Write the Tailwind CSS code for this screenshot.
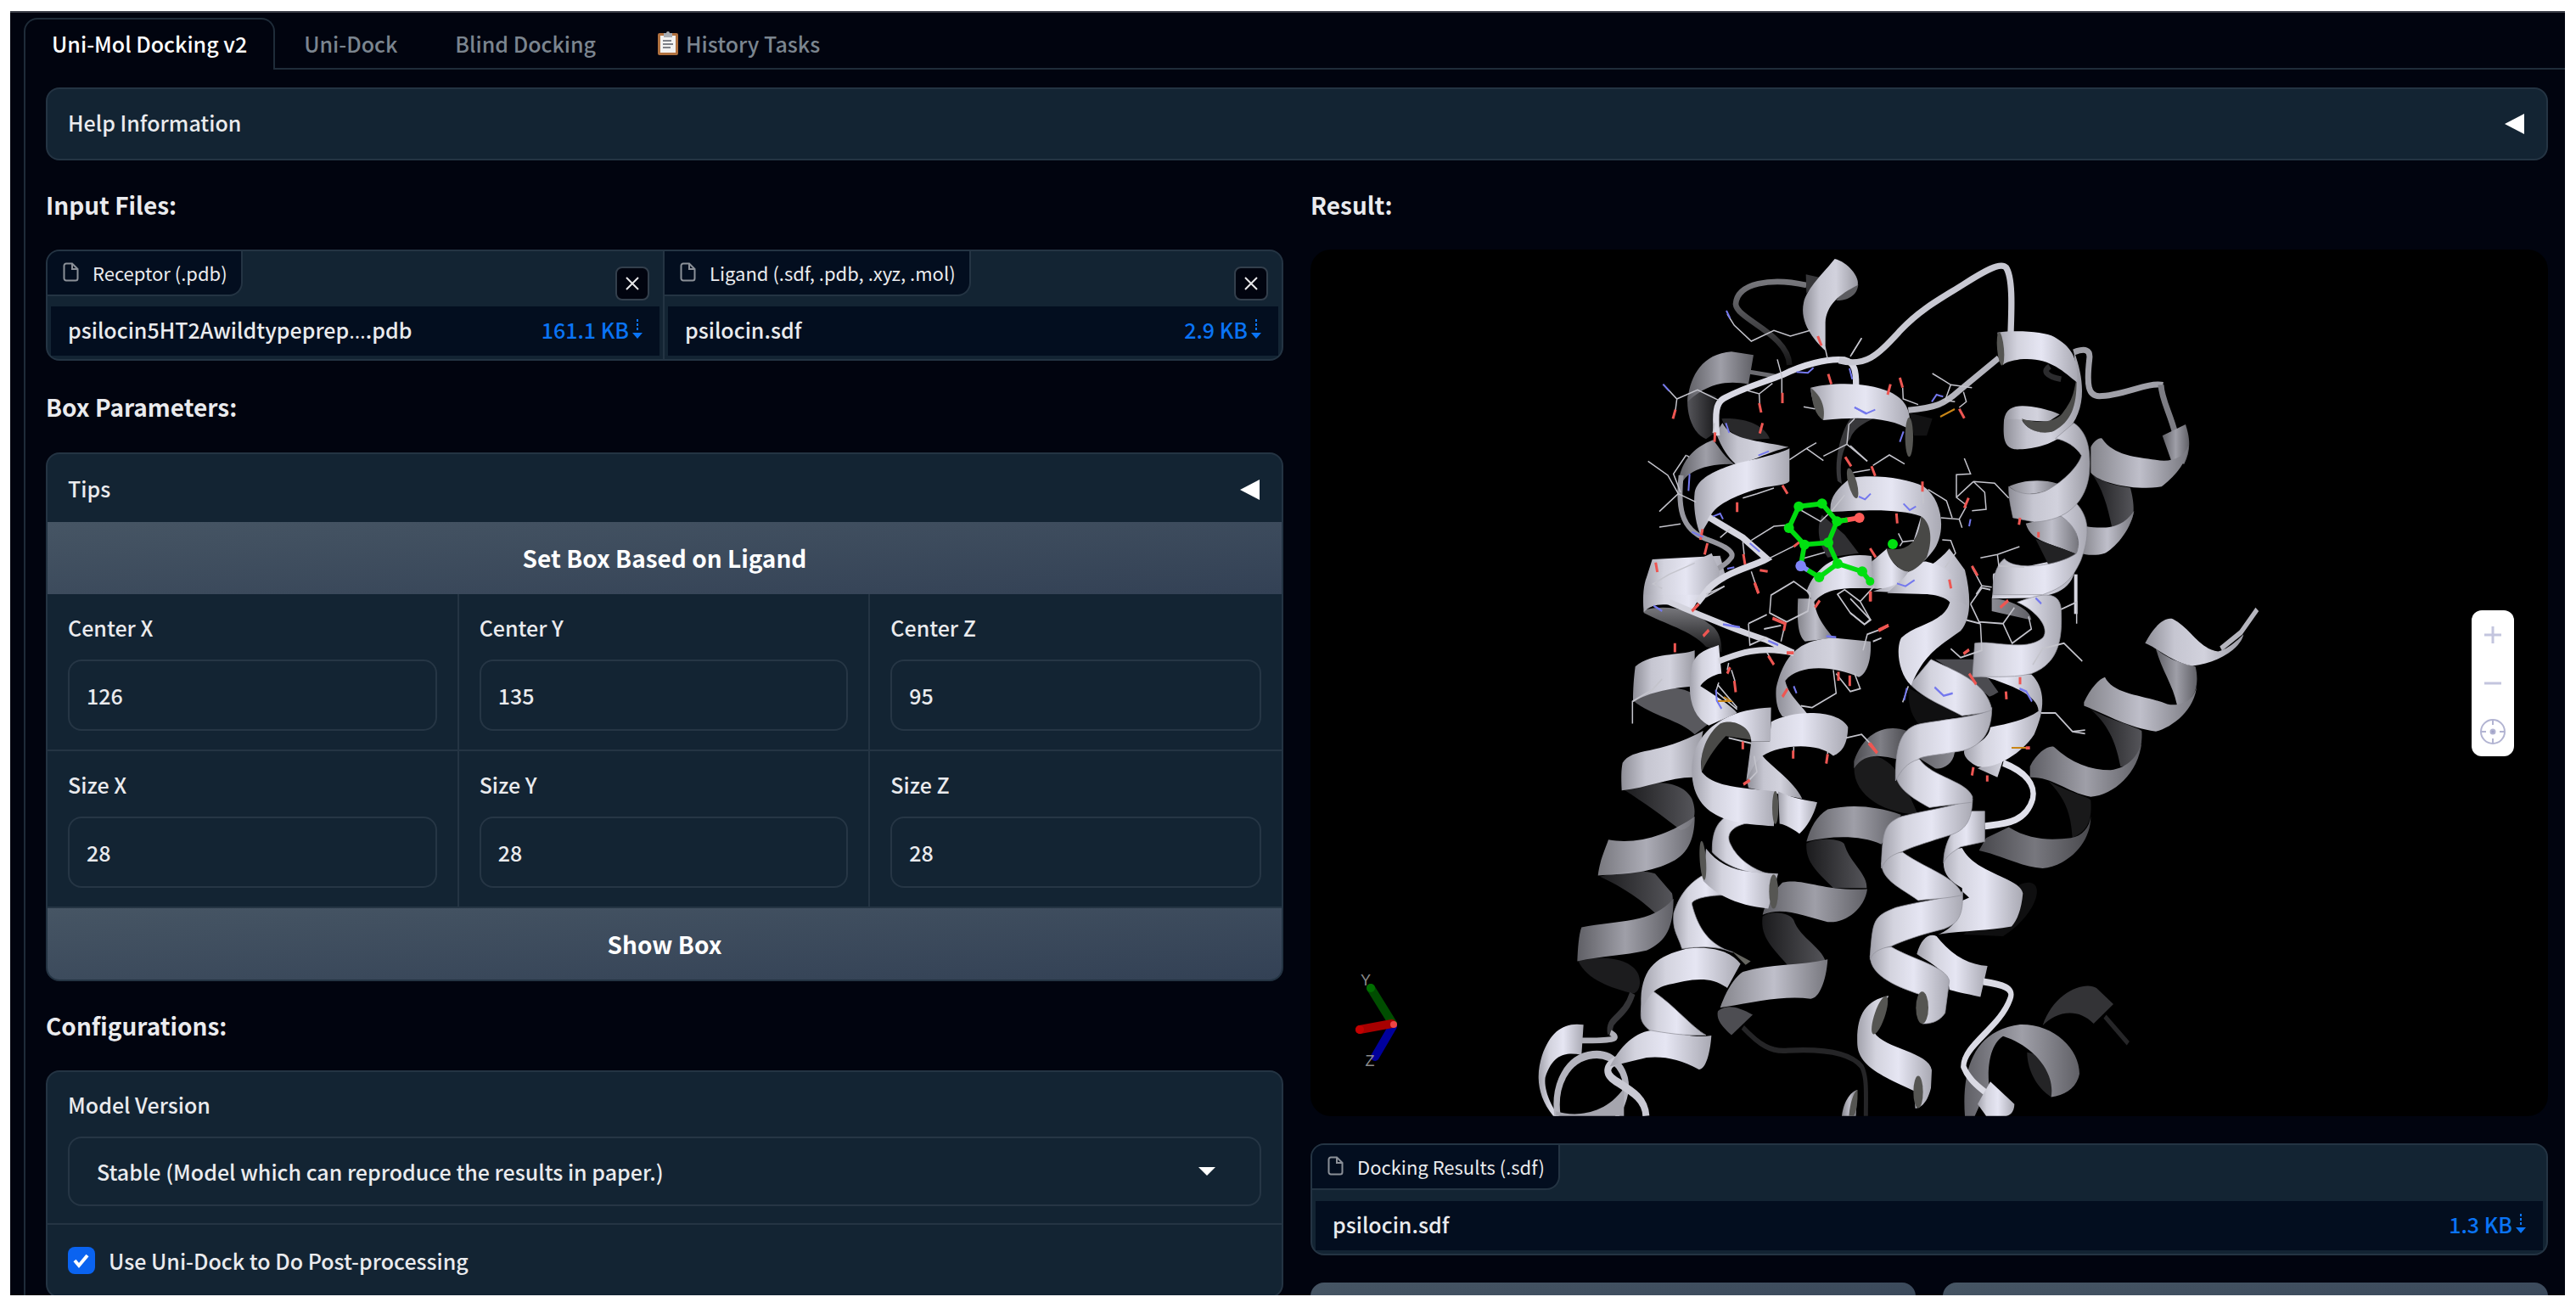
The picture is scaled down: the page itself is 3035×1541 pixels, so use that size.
<!DOCTYPE html>
<html lang="en">
<head>
    <meta charset="UTF-8">
    <meta name="viewport" content="width=device-width, initial-scale=1.0">
    <title>Uni-Mol Docking</title>
    <script src="https://cdn.jsdelivr.net/npm/@tailwindcss/browser@4"></script>
</head>
<body class="h-screen bg-white pt-[13px] pb-[15px] pl-3 pr-[13px] font-['Noto_Sans_CJK_SC','Open_Sans',sans-serif] text-[25px] leading-9 font-medium text-[#eaebee]">
    <main class="h-full overflow-hidden border-t-2 border-[#3c3f49] bg-[#01040f] pl-4 pt-1.5">
        <!-- Tabs -->
        <nav class="flex h-[61px]" role="tablist">
            <button type="button" role="tab" aria-selected="true" class="rounded-t-2xl border-2 border-b-0 border-[#1f2c39] px-[31px] pb-1 text-white">Uni-Mol Docking v2</button>
            <div class="flex flex-1 border-b-2 border-[#1f2c39] text-[#7b858f]">
                <button type="button" role="tab" class="px-[34px]">Uni-Dock</button>
                <button type="button" role="tab" class="px-[34px]">Blind Docking</button>
                <button type="button" role="tab" class="flex items-center gap-2 px-[38px]">
                    <svg class="h-[30px] w-[26px]" viewBox="0 0 26 30" aria-hidden="true">
                        <rect x="1" y="3" width="24" height="26" rx="2" fill="#b0713f"/>
                        <rect x="4" y="6" width="18" height="20" fill="#f2f2f2"/>
                        <path d="M8 3h3a2 2 0 0 1 4 0h3v5H8z" fill="#a9adb3"/>
                        <path d="M7 12h10M7 16h12M7 20h9" stroke="#7d8188" stroke-width="2"/>
                    </svg>
                    History Tasks
                </button>
            </div>
        </nav>

        <div class="border-l-2 border-[#1f2c39] pb-40 pl-6 pr-5 pt-[21px]">
            <button type="button" class="flex h-[86px] w-full items-center justify-between rounded-2xl border-2 border-[#243443] bg-[#132433] pb-1 pl-6 pr-[26px]">
                Help Information
                <svg class="mt-1 h-6 w-[23px]" viewBox="0 0 23 24" aria-hidden="true"><path d="M0 12 23 0v24z" fill="#fff"/></svg>
            </button>

            <div class="mt-8 grid grid-cols-2 gap-8">
                <!-- Left column -->
                <div>
                    <h2 class="h-[73px] pt-0.5 text-[28px] font-bold">Input Files:</h2>
                    <div class="grid h-[131px] grid-cols-2 overflow-hidden rounded-2xl border-2 border-[#243443] bg-[#132433]">
                        <section class="flex flex-col justify-between border-r-2 border-[#243443]">
                            <div class="flex justify-between pr-4">
                                <h3 class="flex h-[53px] items-center gap-4 rounded-br-2xl border-b-2 border-r-2 border-[#243443] bg-[#030e1f] pb-0.5 pl-[18px] pr-4 text-[22px] font-normal">
                                    <svg class="h-[23px] w-[19px]" viewBox="0 0 19 23" fill="none" stroke="#8b9098" stroke-width="2" aria-hidden="true"><path d="M11 1.500H4a2.500 2.500 0 0 0-2.500 2.500v15A2.500 2.500 0 0 0 4 21.500h11a2.500 2.500 0 0 0 2.500-2.500V8zM11 1.500V8h6.500"/></svg>
                                    Receptor (.pdb)
                                </h3>
                                <button type="button" aria-label="Clear receptor" class="mt-[18px] grid size-10 place-items-center rounded-lg border-2 border-[#333f4c] bg-[#01040f]">
                                    <svg class="size-4" viewBox="0 0 16 16" stroke="#e8e8ea" stroke-width="2" aria-hidden="true"><path d="M1 1l14 14M15 1 1 15"/></svg>
                                </button>
                            </div>
                            <div class="mx-1 mb-1 flex h-[58px] items-center justify-between bg-[#030e1f] px-5 pb-1">
                                <span>psilocin5HT2Awildtypeprep<span class="font-['Open_Sans']">…</span>.pdb</span>
                                <a href="#" class="flex items-center gap-1 text-[#0a74f5]">161.1 KB
                                    <svg class="h-6 w-3" viewBox="0 0 12 24" fill="#0a74f5" aria-hidden="true"><path d="M5 0h2v3H5zM5 5h2v3H5zM5 10h2v3H5zM0 16h12l-6 7z"/></svg>
                                </a>
                            </div>
                        </section>
                        <section class="flex flex-col justify-between">
                            <div class="flex justify-between pr-4">
                                <h3 class="flex h-[53px] items-center gap-4 rounded-br-2xl border-b-2 border-r-2 border-[#243443] bg-[#030e1f] pb-0.5 pl-[18px] pr-4 text-[22px] font-normal">
                                    <svg class="h-[23px] w-[19px]" viewBox="0 0 19 23" fill="none" stroke="#8b9098" stroke-width="2" aria-hidden="true"><path d="M11 1.500H4a2.500 2.500 0 0 0-2.500 2.500v15A2.500 2.500 0 0 0 4 21.500h11a2.500 2.500 0 0 0 2.500-2.500V8zM11 1.500V8h6.500"/></svg>
                                    Ligand (.sdf, .pdb, .xyz, .mol)
                                </h3>
                                <button type="button" aria-label="Clear ligand" class="mt-[18px] grid size-10 place-items-center rounded-lg border-2 border-[#333f4c] bg-[#01040f]">
                                    <svg class="size-4" viewBox="0 0 16 16" stroke="#e8e8ea" stroke-width="2" aria-hidden="true"><path d="M1 1l14 14M15 1 1 15"/></svg>
                                </button>
                            </div>
                            <div class="mx-1 mb-1 flex h-[58px] items-center justify-between bg-[#030e1f] px-5 pb-1">
                                <span>psilocin.sdf</span>
                                <a href="#" class="flex items-center gap-1 text-[#0a74f5]">2.9 KB
                                    <svg class="h-6 w-3" viewBox="0 0 12 24" fill="#0a74f5" aria-hidden="true"><path d="M5 0h2v3H5zM5 5h2v3H5zM5 10h2v3H5zM0 16h12l-6 7z"/></svg>
                                </a>
                            </div>
                        </section>
                    </div>

                    <h2 class="mt-8 h-[76px] pt-1 text-[28px] font-bold">Box Parameters:</h2>
                    <form class="overflow-hidden rounded-2xl border-2 border-[#243443] bg-[#132433]">
                        <button type="button" class="flex h-20 w-full items-center justify-between pl-6 pr-[26px]">
                            Tips
                            <svg class="mt-1 h-6 w-[23px]" viewBox="0 0 23 24" aria-hidden="true"><path d="M0 12 23 0v24z" fill="#fff"/></svg>
                        </button>
                        <button type="button" class="block h-[85px] w-full bg-linear-to-br from-[#465564] to-[#334155] pb-0.5 text-[28px] font-bold text-white">Set Box Based on Ligand</button>
                        <div class="grid grid-cols-3 divide-x-2 divide-[#243443] border-b-2 border-[#243443]">
                            <div class="px-6 pb-[22px] pt-[21px]">
                                <label for="cx" class="block">Center X</label>
                                <input id="cx" type="number" value="126" class="mt-5 h-[84px] w-full rounded-2xl border-2 border-[#263645] px-5">
                            </div>
                            <div class="px-6 pb-[22px] pt-[21px]">
                                <label for="cy" class="block">Center Y</label>
                                <input id="cy" type="number" value="135" class="mt-5 h-[84px] w-full rounded-2xl border-2 border-[#263645] px-5">
                            </div>
                            <div class="px-6 pb-[22px] pt-[21px]">
                                <label for="cz" class="block">Center Z</label>
                                <input id="cz" type="number" value="95" class="mt-5 h-[84px] w-full rounded-2xl border-2 border-[#263645] px-5">
                            </div>
                        </div>
                        <div class="grid grid-cols-3 divide-x-2 divide-[#243443] border-b-2 border-[#243443]">
                            <div class="px-6 pb-[22px] pt-[21px]">
                                <label for="sx" class="block">Size X</label>
                                <input id="sx" type="number" value="28" class="mt-5 h-[84px] w-full rounded-2xl border-2 border-[#263645] px-5">
                            </div>
                            <div class="px-6 pb-[22px] pt-[21px]">
                                <label for="sy" class="block">Size Y</label>
                                <input id="sy" type="number" value="28" class="mt-5 h-[84px] w-full rounded-2xl border-2 border-[#263645] px-5">
                            </div>
                            <div class="px-6 pb-[22px] pt-[21px]">
                                <label for="sz" class="block">Size Z</label>
                                <input id="sz" type="number" value="28" class="mt-5 h-[84px] w-full rounded-2xl border-2 border-[#263645] px-5">
                            </div>
                        </div>
                        <button type="button" class="block h-[84px] w-full bg-linear-to-br from-[#465564] to-[#334155] text-[28px] font-bold text-white">Show Box</button>
                    </form>

                    <h2 class="mt-8 h-[73px] pt-0.5 text-[28px] font-bold">Configurations:</h2>
                    <form class="rounded-2xl border-2 border-[#243443] bg-[#132433]">
                        <div class="border-b-2 border-[#243443] px-6 pb-5 pt-5">
                            <label for="model" class="block">Model Version</label>
                            <div class="relative mt-5">
                                <select id="model" class="h-[82px] w-full appearance-none rounded-2xl border-2 border-[#263645] bg-[#132433] px-8">
                                    <option>Stable (Model which can reproduce the results in paper.)</option>
                                </select>
                                <svg class="pointer-events-none absolute right-[54px] top-9 h-2.5 w-5" viewBox="0 0 20 10" aria-hidden="true"><path d="M0 0h20L10 10z" fill="#fff"/></svg>
                            </div>
                        </div>
                        <div class="flex h-[84px] items-center gap-4 px-6">
                            <span class="relative grid size-8 place-items-center">
                                <input id="post" type="checkbox" checked class="size-8 appearance-none rounded-lg bg-[#0a63f0]">
                                <svg class="pointer-events-none absolute size-5" viewBox="0 0 20 20" fill="none" stroke="#fff" stroke-width="4" aria-hidden="true"><path d="M2 10l5 6L17 4"/></svg>
                            </span>
                            <label for="post">Use Uni-Dock to Do Post-processing</label>
                        </div>
                    </form>
                </div>

                <!-- Right column -->
                <div>
                    <h2 class="h-[73px] pt-0.5 text-[28px] font-bold">Result:</h2>
                    <div class="relative overflow-hidden rounded-3xl bg-black">
                        <svg class="block w-full" viewBox="1544 294 1458 1021" role="img" aria-label="Docked ligand in receptor">
                            <defs>
                                <linearGradient id="light"><stop offset="0" stop-color="#a2a2ac"/><stop offset=".25" stop-color="#d3d3de"/><stop offset=".55" stop-color="#e6e6f3"/><stop offset="1" stop-color="#a9a9b3"/></linearGradient>
                                <linearGradient id="pale"><stop offset="0" stop-color="#8e8e97"/><stop offset=".3" stop-color="#c6c6d1"/><stop offset=".6" stop-color="#d2d2dd"/><stop offset="1" stop-color="#9a9aa3"/></linearGradient>
                                <linearGradient id="mid"><stop offset="0" stop-color="#5f5f65"/><stop offset=".5" stop-color="#9f9fa8"/><stop offset="1" stop-color="#606066"/></linearGradient>
                                <linearGradient id="soft"><stop offset="0" stop-color="#85858c"/><stop offset=".5" stop-color="#bfbfca"/><stop offset="1" stop-color="#77777e"/></linearGradient>
                                <linearGradient id="dark"><stop offset="0" stop-color="#1b1b1d"/><stop offset="1" stop-color="#55555a"/></linearGradient>
                                <linearGradient id="fog" x1="0" y1="0" x2="0" y2="1"><stop offset="0" stop-color="#77777c"/><stop offset="1" stop-color="#161617"/></linearGradient>
                            </defs>

                            <!-- lower right, far layer -->
                            <g transform="translate(2180 680) scale(.33333 .42088)">
                                <path fill="#0f0f10" d="M600 860C700 830 670 940 540 1005L400 1000z"/>
                                <path fill="#19191a" d="M700 570C760 600 850 615 850 625 855 680 840 710 785 730 780 660 760 620 700 570z"/>
                                <path fill="url(#mid)" opacity=".75" d="M455 765L480 730 560 700C640 740 720 735 780 730 820 725 845 700 850 670 850 750 760 810 680 815 600 810 540 780 455 765z"/>
                                <path fill="url(#dark)" d="M850 370C920 400 1000 415 1030 430 1035 480 1010 530 955 530 940 470 920 420 850 370z"/>
                                <path fill="url(#mid)" d="M635 530C660 490 700 470 720 475 780 520 850 540 920 540 980 535 1020 500 1030 460 1020 550 930 610 850 615 760 600 720 560 635 560z"/>
                                <path fill="url(#mid)" d="M1080 200C1140 240 1200 245 1220 250 1235 300 1220 350 1155 358 1140 300 1100 260 1080 200z"/>
                                <path fill="url(#soft)" d="M826 350C850 310 880 285 900 280 930 330 1040 330 1120 355 1170 365 1220 340 1225 300 1220 370 1140 420 1080 432 980 420 920 390 826 360z"/>
                                <path fill="url(#pale)" d="M1042 185C1070 140 1110 110 1140 117 1200 140 1230 200 1300 208 1340 200 1370 175 1390 160 1380 200 1300 240 1210 248 1140 240 1090 200 1042 185z"/>
                                <path fill="none" stroke="#b5b5be" stroke-width="15" d="M1310 200L1380 155 1438 90"/>
                                <path fill="#333336" d="M680 1255C720 1160 830 1130 870 1150L930 1195 860 1250C800 1200 720 1220 680 1255z"/>
                                <path fill="none" stroke="#262628" stroke-width="14" d="M900 1230L982 1305"/>
                                <path fill="#242426" d="M625 1330C700 1340 715 1370 718 1390L710 1455C660 1430 625 1380 625 1330z"/>
                                <path fill="url(#mid)" d="M405 1508C395 1400 420 1270 600 1252 720 1250 810 1320 810 1390 800 1430 760 1450 710 1455 725 1380 640 1310 540 1285 490 1310 485 1380 490 1420L440 1508z"/>
                                <path fill="#4b4b50" d="M300 230L440 230 540 340 500 340C440 300 360 260 300 230z"/>
                                <path fill="url(#mid)" d="M500 60C560 60 640 90 640 120L500 95zM230 500L370 480C370 520 330 540 300 535z"/>
                            </g>

                            <!-- lower left helices -->
                            <g transform="translate(1780 680) scale(.33333 .42088)">
                                <path fill="#1b1b1c" d="M1215 520C1260 480 1330 500 1380 560L1440 665C1300 660 1200 600 1215 520z"/>
                                <path fill="url(#mid)" opacity=".8" d="M1213 515C1250 430 1330 410 1400 430L1400 515C1330 505 1260 480 1213 535z"/>
                                <path fill="url(#dark)" d="M1045 745C1100 725 1180 735 1180 750 1200 800 1260 830 1258 870L1140 870C1090 830 1040 800 1045 745z"/>
                                <path fill="url(#mid)" d="M1045 740C1060 700 1080 670 1120 650 1200 635 1290 640 1380 665L1310 748C1230 720 1130 725 1045 740z"/>
                                <path fill="url(#dark)" d="M890 950C920 930 990 940 1000 960 1020 1010 1110 1040 1115 1085L980 1088C930 1040 880 1010 890 950z"/>
                                <path fill="url(#mid)" d="M890 945C900 910 930 880 960 855 1030 840 1100 880 1260 873 1250 930 1180 970 1120 965 1040 950 960 920 890 945z"/>
                                <path fill="#4d4d52" d="M732 1215C760 1195 800 1200 855 1225L780 1282C750 1260 725 1240 732 1215z"/>
                                <path fill="none" stroke="#252527" stroke-width="15" d="M820 1260C880 1310 920 1330 980 1325 1100 1320 1200 1330 1240 1370 1260 1400 1255 1450 1255 1508"/>
                                <path fill="url(#soft)" d="M740 1205C760 1160 790 1120 820 1105 920 1080 1020 1090 1120 1070 1115 1130 1090 1180 1060 1180 960 1170 860 1190 740 1205z"/>

                                <path fill="url(#fog)" d="M470 92C550 75 640 90 700 130 745 150 745 190 745 210L690 195C640 150 540 130 470 100z"/>
                                <path fill="#59595e" d="M432 345C520 305 600 300 650 330L700 410 650 440C600 400 500 390 432 345z"/>
                                <path fill="url(#pale)" d="M440 250C500 210 600 220 650 205L650 305C580 310 490 320 432 350 432 310 435 280 440 250z"/>
                                <path fill="url(#dark)" d="M400 595C470 570 600 560 640 620 660 660 650 700 600 708 540 670 470 630 400 595z"/>
                                <path fill="url(#pale)" d="M395 520C430 475 520 500 680 430L645 560C560 560 480 590 392 597 390 560 390 540 395 520z"/>
                                <path fill="url(#dark)" d="M315 838C400 820 480 820 510 830L570 885C580 920 560 940 530 955 460 900 400 870 315 838z"/>
                                <path fill="url(#soft)" opacity=".9" d="M345 735C450 750 560 720 650 670 650 740 620 780 560 800 480 830 400 830 308 835 315 790 335 760 345 735z"/>
                                <path fill="#1c1c1e" d="M237 1072C300 1060 420 1060 450 1110 465 1140 450 1165 430 1165 360 1150 270 1130 237 1072z"/>
                                <path fill="url(#mid)" d="M250 980C380 960 500 970 575 900 575 980 550 1020 480 1045 400 1060 320 1060 235 1075 237 1040 240 1000 250 980z"/>
                                <path fill="none" stroke="#343437" stroke-width="20" d="M430 1165C400 1240 340 1230 352 1278"/>
                                <path fill="none" stroke="#b0b0b9" stroke-width="16" d="M352 1275C390 1292 370 1298 250 1297"/>
                                <path fill="url(#light)" d="M257 1253L250 1337C200 1330 150 1330 122 1400 115 1440 150 1490 170 1508L150 1508C90 1450 90 1390 110 1340 140 1270 190 1245 257 1253z"/>
                                <path fill="none" stroke="#b4b4be" stroke-width="22" d="M165 1508C150 1420 200 1345 290 1337 370 1330 415 1390 405 1440 395 1480 380 1495 370 1508"/>
                                <path fill="#a5a5ae" d="M160 1495C220 1510 330 1510 400 1430L400 1508H160z"/>
                                <path fill="none" stroke="#c9c9d3" stroke-width="24" d="M400 1345C330 1360 330 1390 370 1410 430 1440 475 1460 478 1508"/>
                                <path fill="url(#light)" d="M350 1370C400 1290 470 1260 540 1268 600 1280 660 1290 709 1283 705 1330 690 1378 665 1378 600 1350 540 1340 480 1345 430 1355 400 1360 350 1370z"/>
                                <path fill="url(#light)" stroke="#92929b" stroke-width="2" d="M462 1200C470 1170 490 1160 505 1160 580 1200 640 1260 690 1282 620 1285 540 1275 490 1268 455 1245 458 1230 462 1200z"/>
                                <path fill="url(#light)" stroke="#92929b" stroke-width="2" d="M576 940C600 880 640 850 690 830L760 890C700 890 640 900 640 915 660 980 700 1030 785 1050 720 1030 660 1035 605 1040 590 1000 570 990 576 940z"/>
                                <path fill="url(#light)" d="M460 1180C465 1090 520 1060 620 1040 720 1030 780 1050 812 1082L765 1150C700 1110 620 1130 560 1140 500 1150 480 1180 460 1220z"/>
                                <path fill="#65655f" d="M782 1047L848 1075 830 1085z"/>
                                <path fill="url(#light)" stroke="#92929b" stroke-width="2" d="M712 770C710 700 740 680 770 665L870 685C780 690 760 720 775 745 800 790 860 820 910 830 830 830 760 810 712 770z"/>
                                <path fill="url(#light)" d="M690 760C760 830 850 825 945 830L910 928C820 920 740 900 680 850z"/>
                                <ellipse cx="679" cy="793" rx="11" ry="55" fill="#565653" transform="rotate(-5 679 793)"/>
                                <ellipse cx="929" cy="880" rx="16" ry="48" fill="#565653"/>

                                <path fill="url(#light)" d="M735 190L745 270C720 270 680 290 670 305 720 330 780 360 800 380L700 415C640 390 620 330 640 250 650 210 700 200 735 190z"/>
                                <path fill="url(#soft)" d="M1015 60C1010 140 1020 165 1040 180L1140 170C1100 130 1080 110 1070 60z"/>
                                <path fill="url(#pale)" d="M938 310C970 200 1040 175 1140 170L1272 180C1275 230 1260 270 1230 280 1150 250 1020 240 970 290 980 330 1030 360 1050 385L960 390C940 370 935 340 938 310z"/>
                                <path fill="url(#pale)" d="M835 570C840 500 860 480 890 500 920 530 1000 570 1030 620L840 590z"/>
                                <path fill="url(#light)" d="M920 405C1000 370 1160 370 1192 420 1190 470 1170 490 1140 500 1080 460 950 470 890 500 860 520 850 540 832 570L850 460 915 460z"/>
                                <path fill="url(#light)" d="M945 600C1000 620 1050 625 1083 630 1070 670 1045 700 1020 718 990 700 960 690 950 690z"/>
                                <path fill="#4a4a48" d="M675 545C665 440 730 400 780 400 820 405 855 430 850 455L760 445C730 470 700 500 675 545z"/>
                                <path fill="url(#light)" d="M920 365L918 460 850 460C850 415 780 395 740 410 690 440 665 500 675 545 720 590 830 590 935 600L930 697C820 690 640 690 640 540 640 430 760 370 920 365z"/>
                                <ellipse cx="935" cy="645" rx="11" ry="46" fill="#565653"/>
                                <path fill="url(#light)" d="M480 0L500-50 740-60 760 0C700 20 670 50 640 95 560 70 500 70 470 98 465 50 470 20 480 0z"/>
                                <path fill="none" stroke="#d4d4de" stroke-width="17" d="M560 70C680 110 800 150 900 175L1000 212C880 190 800 215 735 235"/>
                            </g>

                            <!-- lower middle helices -->
                            <g transform="translate(2180 680) scale(.33333 .42088)">
                                <path fill="url(#light)" d="M450 535L545 500 520 560zM500 60C510 20 500 0 505-10L800-60C800 30 740 50 640 58z"/>
                                <path fill="url(#light)" d="M430 275L640 272C690 310 690 370 650 440 600 500 500 540 450 530 400 510 398 490 405 480 450 470 490 450 495 420 560 410 620 400 665 375 665 330 560 300 480 280z"/>
                                <path fill="#000" d="M505 330L560 305C610 320 655 345 655 372 620 395 560 405 497 415 503 385 500 350 490 335z"/>
                                <path fill="url(#light)" stroke="#92929b" stroke-width="2" d="M590 70C660 50 740 30 745 90 750 170 740 240 640 270 560 285 480 275 432 280L440 185C500 175 620 210 680 170 710 140 650 90 590 70z"/>
                                <path fill="none" stroke="#e0e0ea" stroke-width="19" d="M540 520C620 545 655 580 645 620 620 690 540 690 475 697"/>
                                <path fill="#101011" d="M205 310L395 388 240 410C210 380 205 350 205 310z"/>
                                <path fill="url(#light)" d="M235 1055C250 1010 280 995 305 1005 360 1060 420 1085 485 1088L460 1175C400 1165 370 1160 350 1155 345 1100 280 1080 235 1055z"/>
                                <path fill="none" stroke="#dadae4" stroke-width="19" d="M470 1132C540 1140 580 1150 565 1180 530 1260 400 1310 400 1370 420 1410 460 1430 490 1450"/>
                                <path fill="url(#light)" d="M330 790C350 770 370 760 395 758 440 830 600 840 610 885 605 930 590 960 570 978 480 990 400 990 310 1000 380 980 400 930 395 870 350 850 325 830 330 790z"/>
                                <path fill="#000" d="M396 880L420 897 396 905z"/>
                                <path fill="url(#light)" stroke="#92929b" stroke-width="2" d="M330 790C335 740 360 700 430 655L475 655 475 740 390 755C360 770 340 780 330 800z"/>
                                <path fill="url(#light)" stroke="#92929b" stroke-width="2" d="M70 1060C90 1040 120 1035 145 1035 220 1070 340 1090 350 1130L335 1220C310 1250 270 1250 255 1250L245 1168C180 1150 70 1120 70 1060z"/>
                                <ellipse cx="254" cy="1205" rx="22" ry="45" fill="#555552"/>
                                <path fill="url(#light)" stroke="#92929b" stroke-width="2" d="M70 1060C80 960 80 950 160 925 250 905 350 900 397 880 400 950 380 970 330 985 250 1000 180 1020 145 1033 100 1040 80 1050 70 1070z"/>
                                <path fill="url(#light)" stroke="#92929b" stroke-width="2" d="M110 800C120 780 160 770 185 770 250 810 380 840 395 890 340 900 290 900 240 905 180 870 112 850 110 800z"/>
                                <path fill="url(#light)" stroke="#92929b" stroke-width="2" d="M110 800C115 710 120 690 180 670 280 650 380 640 432 620 430 680 410 705 360 720 280 740 200 760 185 768 130 780 120 800 110 815z"/>
                                <path fill="url(#light)" stroke="#92929b" stroke-width="2" d="M162 555C190 520 230 505 245 510 290 560 410 570 432 615L430 630C380 635 320 640 280 645 220 620 165 590 162 555z"/>
                                <path fill="url(#light)" stroke="#92929b" stroke-width="2" d="M160 560C160 470 180 420 250 410 350 395 480 390 500 365 500 430 470 470 400 485 300 500 250 500 240 510 200 520 180 540 160 570z"/>
                                <path fill="url(#light)" stroke="#92929b" stroke-width="2" d="M212 300L285 230C360 260 480 290 500 370 490 380 420 385 395 388 330 360 260 340 212 300z"/>
                                <path fill="url(#light)" d="M80 40C200 10 300-30 350-80L405-20C430 60 425 120 390 150 300 200 260 220 215 303 170 270 160 200 180 170 230 130 330 130 352 70 320 40 200 45 80 40z"/>
                                <path fill="url(#light)" d="M135 1172L85 1275C120 1320 280 1330 288 1380L285 1430C270 1480 240 1487 230 1487L225 1438C120 1400 30 1370 25 1310 20 1230 50 1185 135 1172z"/>
                                <ellipse cx="104" cy="1226" rx="18" ry="58" fill="#555552" transform="rotate(24 104 1226)"/>
                                <ellipse cx="240" cy="1441" rx="17" ry="45" fill="#555552"/>
                                <path fill="url(#soft)" d="M-30 1508C-25 1470 0 1440 25 1435L20 1508z"/>
                                <path fill="#555552" d="M-5 1508C0 1470 10 1445 25 1435 28 1470 20 1500 12 1508z"/>
                                <path fill="url(#light)" d="M450 1475L495 1412 580 1475C580 1500 560 1508 550 1508L480 1508z"/>
                            </g>

                            <!-- upper left -->
                            <g transform="translate(1780 280) scale(.33333)">
                                <path fill="none" stroke="url(#fog)" stroke-width="20" d="M1045 168C920 140 800 160 795 235 800 290 980 340 985 450"/>
                                <path fill="#37373a" d="M1043 130L1090 140 1045 198z"/>
                                <path fill="#5c5c60" d="M1228 165C1225 210 1180 224 1150 222L1180 180z"/>
                                <path fill="url(#pale)" d="M1145 75C1190 85 1235 140 1226 168 1160 200 1115 240 1112 300L1112 400C1070 360 1020 300 1035 230 1045 180 1110 120 1145 75z"/>
                                <path fill="url(#dark)" transform="matrix(-1 0 0 1 1350 0)" d="M725 560L710 535 625 560 628 690 660 712C710 690 730 620 725 560z"/>
                                <path fill="#29292b" d="M745 640C800 635 890 650 915 710L840 715C790 700 760 680 745 640z"/>
                                <path fill="url(#mid)" d="M858 415L840 518C770 505 700 510 625 580 630 500 670 410 780 403z"/>
                                <path fill="none" stroke="#6c6c71" stroke-width="15" d="M845 475L950 492"/>
                                <path fill="url(#mid)" d="M715 715C650 740 590 790 590 900 605 850 640 800 790 800 750 770 740 745 715 715z"/>
                                <path fill="url(#pale)" d="M725 690L748 655C780 715 860 715 982 740 900 760 860 790 795 800 760 770 740 730 725 690z"/>
                                <path fill="none" stroke="#97979f" stroke-width="18" d="M602 840C590 950 600 1030 690 1065 760 1090 790 1110 780 1130 760 1160 740 1160 720 1180"/>
                                <path fill="url(#light)" d="M650 900C660 850 720 825 790 800 880 780 960 760 985 745L985 860C970 880 900 875 850 895 780 920 710 950 700 1000L670 1050C650 1000 645 940 650 900z"/>
                                <path fill="url(#light)" d="M472 1262C480 1190 510 1187 530 1182 600 1165 660 1140 710 1115L738 1180C740 1220 700 1240 680 1262z"/>
                                <path fill="none" stroke="#d6d6e0" stroke-width="23" d="M700 988L820 1060 905 1135C850 1165 760 1180 700 1240L660 1290"/>
                                <path fill="none" stroke="#d9d9e4" stroke-width="22" d="M728 700C722 620 725 585 750 570 820 530 900 510 960 485 1030 450 1120 425 1180 432 1215 440 1222 470 1220 535"/>
                            </g>

                            <!-- upper right -->
                            <g transform="translate(2180 280) scale(.33333)">
                                <path fill="none" stroke="#c8c8d2" stroke-width="22" d="M-40 434C60 460 100 410 180 325 250 250 330 210 400 165 470 120 530 85 550 105 575 140 570 250 567 335"/>
                                <path fill="#121213" d="M210 620L290 640 270 700 225 700z"/>
                                <path fill="#38383b" d="M0 640L80 640C40 660 10 680 0 710-30 750-40 800-30 870L-45 860C-60 780-30 680 0 640z"/>
                                <path fill="url(#light)" d="M-140 530C-60 510 60 510 140 545 190 570 215 600 212 680 150 640 60 630-95 645-120 610-140 570-140 530z"/>
                                <path fill="#555552" d="M-138 532C-90 570-90 620-96 645-120 630-138 590-138 532z"/>
                                <ellipse cx="208" cy="705" rx="14" ry="70" fill="#555552"/>
                                <path fill="none" stroke="#b5b5be" stroke-width="21" d="M205 610C300 600 330 590 380 545L525 425"/>
                                <path fill="none" stroke="#2c2c2e" stroke-width="20" d="M745 500C690 490 680 470 705 455"/>
                                <path fill="none" stroke="#a0a0a8" stroke-width="21" d="M790 405C830 390 850 395 845 430 835 520 840 560 880 560 960 560 1050 510 1105 520"/>
                                <path fill="none" stroke="#7d7d84" stroke-width="21" d="M1098 520C1100 570 1130 620 1148 690"/>
                                <path fill="url(#mid)" d="M1103 700L1185 660C1205 720 1200 760 1180 800L1135 790z"/>
                                <path fill="url(#dark)" d="M850 830C900 880 990 880 990 885 1010 960 1000 1000 985 1010L925 1025C910 950 890 880 850 830z"/>
                                <path fill="url(#soft)" d="M850 740C860 720 880 705 890 710 930 770 1010 775 1080 785 1130 795 1180 780 1195 735 1190 800 1140 850 1100 880 1020 895 880 870 850 830z"/>
                                <path fill="url(#soft)" d="M830 1020C900 1030 960 1030 1003 965 990 1040 930 1100 900 1115 870 1125 830 1122 815 1115z"/>
                                <path fill="url(#pale)" d="M543 645C550 595 590 590 640 597 690 605 720 615 740 625L700 650 606 645z"/>
                                <path fill="#4c4c4a" d="M606 640C660 660 730 650 750 620 790 570 790 540 798 505 825 580 770 665 720 690 670 695 620 680 606 640z"/>
                                <path fill="url(#pale)" d="M790 400C835 520 830 620 760 690 710 740 620 750 580 748 540 740 540 700 543 645 560 640 590 640 606 643 620 680 680 700 720 683 780 650 800 600 800 505z"/>
                                <path fill="url(#light)" d="M520 335C600 325 690 335 720 350 780 385 805 420 802 512 750 470 700 420 600 430 570 435 550 440 540 450z"/>
                                <ellipse cx="531" cy="393" rx="12" ry="59" fill="#555552" transform="rotate(-5 531 393)"/>
                                <path fill="url(#soft)" d="M620 1010C680 1000 730 980 760 985 810 1030 810 1090 800 1120 720 1080 640 1080 620 1010z"/>
                                <path fill="#222224" d="M655 1065L805 1120 750 1155 700 1155z"/>
                                <path fill="url(#light)" stroke="#8a8a92" stroke-width="2" d="M795 935C850 990 845 1060 815 1140 780 1220 740 1240 680 1262L505 1262C500 1200 520 1150 545 1135 580 1180 740 1160 800 1115 820 1060 790 1010 730 975z"/>
                                <path fill="url(#soft)" d="M560 880C600 860 670 850 735 870 700 900 640 910 600 905z"/>
                                <path fill="url(#pale)" stroke="#8a8a92" stroke-width="2" d="M790 655C840 690 850 750 845 830 835 930 770 1000 650 1005L575 990C565 940 560 920 560 880 590 905 640 915 690 895 760 860 810 800 817 770 800 740 760 715 725 710z"/>
                                <path fill="none" stroke="#d6d6e0" stroke-width="12" d="M797 1190V1330"/>

                                <path fill="#303033" d="M-100 980L-20 1050 30 1115-80 1130C-115 1080-120 1020-100 980z"/>
                                <path fill="url(#light)" d="M-155 1250C-120 1160-50 1110 75 1125L85 1240C0 1240-80 1230-130 1290z"/>
                                <path fill="url(#light)" d="M130 1256C200 1200 220 1140 270 1145 340 1160 400 1210 412 1300L340 1262z"/>
                                <path fill="url(#light)" d="M0 850C80 835 200 850 260 880 330 930 340 1050 290 1110 260 1150 220 1180 190 1180L250 985C180 960 80 960-70 970-75 920-50 890 0 850z"/>
                                <path fill="#484846" d="M250 985C290 1010 290 1080 270 1130 240 1170 200 1190 190 1180 160 1160 130 1130 125 1098 180 1110 240 1100 250 985z"/>
                                <path fill="url(#light)" d="M75 1145L128 1100C140 1150 180 1180 205 1180 180 1230 120 1245 80 1240z"/>
                                <ellipse cx="8" cy="868" rx="15" ry="55" fill="#555552" transform="rotate(-15 8 868)"/>
                            </g>

                            <!-- side chains -->
                            <g fill="none" stroke="#c4c4cc" stroke-width="1.400">
                                <path transform="translate(1780 280) scale(.33333)" stroke-width="4.500" d="M765 270L790 310 850 366 930 328 988 348 1058 328M1240 355L1200 420M540 520L587 570 660 538 735 575M587 570L582 610M835 540L878 552 925 515M878 552L880 590M942 430L958 490 958 550M1035 598L1075 605M985 785L1045 745 1080 725M1045 745L1105 788M1105 772L1188 730 1260 790M1188 730L1195 660 1215 640M485 790L555 840 592 905 525 968M592 905L655 935M620 768L575 835 600 900M630 775L622 770M525 1023L600 1012M850 1070L930 1020 990 1015M1020 960L1095 1003 1135 965 1180 910M910 1135L1000 1090M1030 1135L1110 1112M820 1075L825 1120M740 1060L775 1030M850 1180L865 1225M720 655L715 690M820 920L870 905 930 885M505 1225L535 1240M500 1225L560 1190 650 1150M690 1260L755 1232M1110 385L1120 430"/>
                                <path transform="translate(2180 280) scale(.33333)" stroke-width="4.500" d="M40 355L5 412M290 480L355 520 430 530M355 520L335 575 370 580M400 545L410 580 385 600M185 530L187 570 240 590M80 805L138 768 192 800M0 735L60 790M403 780L425 835 375 838 375 915M435 862L510 868 560 920M435 862L375 918 410 945M435 862L475 900 480 960 430 965M320 990L385 995 410 950M385 995L395 1025M275 890L340 930 360 990M170 1045L185 1075 225 1070M185 1075L175 1090M325 1068L355 1070 372 1115 335 1165M460 1132L520 1120 598 1092M520 1120L525 1160 615 1165M430 1165L465 1230 500 1235M465 1230L445 1260M10 830L70 820M255 880L258 940"/>
                                <path transform="translate(1780 680) scale(.33333 .42088)" stroke-width="4.500" d="M690 55L755 25M920 50L1000 12 1058 45 1050 95 975 125 915 100zM840 130L905 105M840 130L845 190 900 170M955 180L970 130M895 145L955 135M1155 48L1180 35 1235 68 1272 120 1250 132 1200 100zM1235 68L1285 25M1245 205L1260 160 1300 148M1280 180L1310 170M430 410L430 348 500 315 535 285M735 295L725 320 800 370M730 300L800 365M770 240L765 260M780 260L792 290M1140 260L1150 325 1065 365 1025 360M1150 270L1200 320 1235 312 1215 270M1185 450L1240 440 1270 465M770 450L850 465M1000 475V490M860 500L870 545 840 570M905 210L920 230M1120 480V495"/>
                                <path transform="translate(2180 680) scale(.33333 .42088)" stroke-width="4.500" d="M0 60L70 118 50 132 0 100M425 75L465 30 495 35M425 75L455 125 540 130 580 85M460 130L465 205 390 225 355 200M540 130L572 185 640 145 630 110M410 120L460 130M645 245L680 200 755 185 820 235M745 90L800 70V130M675 380L725 380 785 432 830 438M785 432L830 428M205 305L185 350M690 115L692 160"/>
                            </g>
                            <g fill="none" stroke="#ee5652" stroke-width="9">
                                <path transform="translate(1780 280) scale(.33333)" d="M1085 348L1098 382M1122 482L1133 518M582 608L573 640M960 548V585M878 585L885 618M890 655L880 692M722 688L720 722M1182 775L1203 808M960 875L978 905M800 935V970M678 1030L670 1068M695 1080L685 1120M822 1118L828 1155M512 1148L518 1182M862 1222L875 1258M1000 1092L1025 1072M880 1175L908 1180"/>
                                <path transform="translate(2180 280) scale(.33333)" d="M175 495L185 530M142 518L132 555M385 605L403 638M75 808L88 842M255 862V898M418 920L403 955M163 975L166 1010M70 1098L90 1130M430 1160L450 1195M600 990L596 1015M665 1040V1060M350 1208L356 1240"/>
                                <path transform="translate(1780 680) scale(.33333 .42088)" d="M862 15L876 45M640 95L665 75M680 165L700 148M580 185V210M925 115L970 130 965 150M1075 85L1092 65M1300 148L1335 135M975 212H1000M910 220L930 245M765 270L775 252M790 290L795 322M960 335L978 312M1158 265V290M1198 275V305M820 460V482M998 485V508M1120 495L1115 522M1270 465L1295 492M822 580L845 568M1272 40V68"/>
                                <path transform="translate(2180 680) scale(.33333 .42088)" d="M530 85L558 65M70 40V68M100 150L135 135M420 270L445 300M600 280V300M550 320L552 342M435 532L430 555M484 555V572M620 478H635M400 215L420 203M65 465L95 492"/>
                            </g>
                            <g fill="none" stroke="#7478ee" stroke-width="6">
                                <path transform="translate(1780 280) scale(.33333)" d="M762 258L775 285M538 518L560 542M1010 475L1050 478 1070 460M1197 462L1207 500M760 655L772 690M875 770L912 755M632 835L628 895M715 985L740 975 750 995M640 1040L680 1058M845 1080L880 1110M765 1170L790 1165M1215 600L1260 622"/>
                                <path transform="translate(2180 280) scale(.33333)" d="M15 600L55 622 88 608M288 580L305 555 328 562M188 685L175 722M30 915L52 925 72 905M188 940L210 963 232 950M425 995L420 1020M165 1222L195 1232 227 1210"/>
                                <path transform="translate(1780 680) scale(.33333 .42088)" d="M750 132L810 140M910 178L945 190M725 315L728 345 745 368M505 80L535 95M1000 305L1010 325M1115 165L1150 168"/>
                                <path transform="translate(2180 680) scale(.33333 .42088)" d="M298 308L330 332 362 325M598 312L622 320 642 348M200 310L190 345M655 58L675 74"/>
                            </g>
                            <path stroke="#c98616" stroke-width="2" fill="none" d="M2286 491l17-9M2024 826l15 0-8-5M2370 881h17"/>

                            <!-- ligand -->
                            <g transform="translate(1780 280) scale(.33333)" stroke="#00dc10" stroke-width="17" fill="none">
                                <path d="M1018 950L1100 940 1153 1003 1122 1078 1038 1085 983 1026zM1122 1078L1155 1152 1090 1200 1025 1160 1038 1085M1155 1152L1242 1180 1270 1215"/>
                                <path stroke="#ff5b57" d="M1153 1003L1190 997 1232 990"/>
                                <path d="M1153 1003L1190 997"/>
                                <path stroke="#8084f8" d="M1025 1160L1050 1175"/>
                                <g fill="#00e010" stroke="none">
                                    <circle cx="1018" cy="950" r="18"/><circle cx="1100" cy="940" r="18"/><circle cx="1153" cy="1003" r="18"/><circle cx="1122" cy="1078" r="18"/><circle cx="1038" cy="1085" r="18"/><circle cx="983" cy="1026" r="18"/><circle cx="1155" cy="1152" r="18"/><circle cx="1090" cy="1200" r="18"/><circle cx="1242" cy="1180" r="18"/><circle cx="1270" cy="1215" r="15"/><circle cx="1350" cy="1083" r="18"/>
                                    <circle cx="1025" cy="1160" r="19" fill="#8084f8"/><circle cx="1232" cy="990" r="18" fill="#ff5b57"/>
                                </g>
                            </g>

                            <!-- axes -->
                            <g stroke-width="10" stroke-linecap="round">
                                <path stroke="#004d00" d="M1615 1164L1641 1206"/>
                                <path stroke="#00009c" d="M1641 1209L1620 1245"/>
                                <path stroke="#a80000" d="M1602 1213L1640 1206"/>
                            </g>
                            <circle cx="1615" cy="1164" r="5" fill="#006e00"/>
                            <circle cx="1602" cy="1213" r="5" fill="#c40000"/>
                            <circle cx="1642" cy="1207" r="4" fill="#f04444"/>
                            <g fill="#8c8c8c" font-size="18" font-family="Liberation Sans, sans-serif" text-anchor="middle"><text x="1609" y="1161">Y</text><text x="1614" y="1256">Z</text></g>
                        </svg>
                        <div class="absolute right-10 top-[425px] flex w-[50px] flex-col overflow-hidden rounded-xl bg-white">
                            <button type="button" aria-label="Zoom in" class="grid h-[58px] place-items-center"><svg class="size-6" viewBox="0 0 24 24" stroke="#c3c5de" stroke-width="3" aria-hidden="true"><path d="M2 12h20M12 2v20"/></svg></button>
                            <button type="button" aria-label="Zoom out" class="grid h-[56px] place-items-center"><svg class="size-6" viewBox="0 0 24 24" stroke="#c3c5de" stroke-width="3" aria-hidden="true"><path d="M2 12h20"/></svg></button>
                            <button type="button" aria-label="Reset view" class="grid h-[58px] place-items-center"><svg class="size-8" viewBox="0 0 32 32" fill="none" stroke="#b2b4d2" stroke-width="2" aria-hidden="true"><circle cx="16" cy="16" r="14"/><path d="M16 2v6M16 24v6M2 16h6M24 16h6"/><circle cx="16" cy="16" r="2.500" fill="#9fa1c8"/></svg></button>
                        </div>
                    </div>

                    <section class="mt-8 flex h-[132px] flex-col justify-between overflow-hidden rounded-2xl border-2 border-[#243443] bg-[#132433]">
                        <div class="flex">
                            <h3 class="flex h-[53px] items-center gap-4 rounded-br-2xl border-b-2 border-r-2 border-[#243443] bg-[#030e1f] pb-0.5 pl-[18px] pr-4 text-[22px] font-normal">
                                <svg class="h-[23px] w-[19px]" viewBox="0 0 19 23" fill="none" stroke="#8b9098" stroke-width="2" aria-hidden="true"><path d="M11 1.500H4a2.500 2.500 0 0 0-2.500 2.500v15A2.500 2.500 0 0 0 4 21.500h11a2.500 2.500 0 0 0 2.500-2.500V8zM11 1.500V8h6.500"/></svg>
                                Docking Results (.sdf)
                            </h3>
                        </div>
                        <div class="mx-1 mb-1 flex h-[58px] items-center justify-between bg-[#030e1f] px-5 pb-1">
                            <span>psilocin.sdf</span>
                            <a href="#" class="flex items-center gap-1 text-[#0a74f5]">1.3 KB
                                <svg class="h-6 w-3" viewBox="0 0 12 24" fill="#0a74f5" aria-hidden="true"><path d="M5 0h2v3H5zM5 5h2v3H5zM5 10h2v3H5zM0 16h12l-6 7z"/></svg>
                            </a>
                        </div>
                    </section>
                    <div class="mt-8 grid grid-cols-2 gap-8">
                        <button type="button" aria-label="Run docking" class="h-[84px] rounded-2xl bg-linear-to-br from-[#465564] to-[#334155]"></button>
                        <button type="button" aria-label="Show results" class="h-[84px] rounded-2xl bg-linear-to-br from-[#465564] to-[#334155]"></button>
                    </div>
                </div>
            </div>
        </div>
    </main>
</body>
</html>
